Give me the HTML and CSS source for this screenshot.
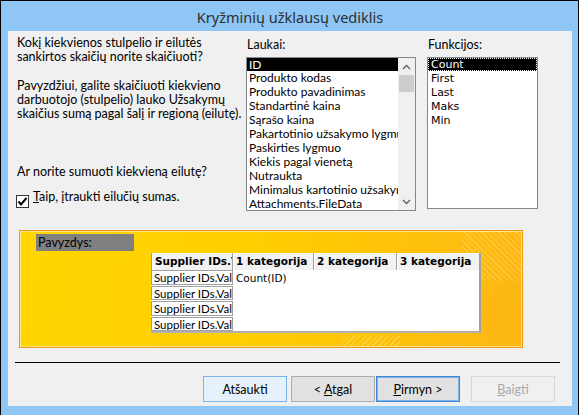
FILE: index.html
```html
<!DOCTYPE html>
<html lang="lt">
<head>
    <meta charset="UTF-8">
    <title>Kryžminių užklausų vediklis</title>
    <link rel="stylesheet" href="styles.css">
</head>
<body>
    <div class="window">
        <div class="titlebar">Kryžminių užklausų vediklis</div>

        <div class="client">
            <div class="top">
                <div class="intro">
                    <p class="q1">Kokį kiekvienos stulpelio ir eilutės<br>sankirtos skaičių norite skaičiuoti?</p>
                    <p class="q2">Pavyzdžiui, galite skaičiuoti kiekvieno<br>darbuotojo (stulpelio) lauko Užsakymų<br>skaičius sumą pagal šalį ir regioną (eilutę).</p>
                    <p class="q3">Ar norite sumuoti kiekvieną eilutę?</p>
                    <label class="check">
                        <span class="check-box">
                            <svg width="11" height="11" viewBox="0 0 11 11"><path d="M1.5 5.5 L4 8.5 L9.5 2" fill="none" stroke="#000" stroke-width="2"/></svg>
                        </span>
                        <span><u>T</u>aip, įtraukti eilučių sumas.</span>
                    </label>
                </div>

                <div class="fields">
                    <div class="cap">Laukai:</div>
                    <div class="listbox">
                        <ul class="items">
                            <li class="selected">ID</li>
                            <li>Produkto kodas</li>
                            <li>Produkto pavadinimas</li>
                            <li>Standartinė kaina</li>
                            <li>Sąrašo kaina</li>
                            <li>Pakartotinio užsakymo lygmuo</li>
                            <li>Paskirties lygmuo</li>
                            <li>Kiekis pagal vienetą</li>
                            <li>Nutraukta</li>
                            <li>Minimalus kartotinio užsakymo kiekis</li>
                            <li>Attachments.FileData</li>
                        </ul>
                        <div class="vscroll">
                            <div class="arrow">
                                <svg width="9" height="6" viewBox="0 0 9 6"><path d="M1 5 L4.5 1.5 L8 5" fill="none" stroke="#606060" stroke-width="1.4"/></svg>
                            </div>
                            <div class="thumb"></div>
                            <div class="track"></div>
                            <div class="arrow">
                                <svg width="9" height="6" viewBox="0 0 9 6"><path d="M1 1 L4.5 4.5 L8 1" fill="none" stroke="#606060" stroke-width="1.4"/></svg>
                            </div>
                        </div>
                    </div>
                </div>

                <div class="funcs">
                    <div class="cap">Funkcijos:</div>
                    <ul class="func-list">
                        <li class="selected">Count</li>
                        <li>First</li>
                        <li>Last</li>
                        <li>Maks</li>
                        <li>Min</li>
                    </ul>
                </div>
            </div>

            <div class="sample">
                <div class="sample-label">Pavyzdys:</div>
                <div class="grid">
                    <div class="grid-head">
                        <div class="hcell first">Supplier IDs.Value</div>
                        <div class="hcell">1 kategorija</div>
                        <div class="hcell">2 kategorija</div>
                        <div class="hcell last">3 kategorija</div>
                    </div>
                    <div class="grid-body">
                        <div class="row-heads">
                            <div class="rcell">Supplier IDs.Value</div>
                            <div class="rcell">Supplier IDs.Value</div>
                            <div class="rcell">Supplier IDs.Value</div>
                            <div class="rcell">Supplier IDs.Value</div>
                        </div>
                        <div class="values">Count(ID)</div>
                    </div>
                </div>
            </div>

            <div class="sep"></div>

            <div class="buttons">
                <button class="btn hot">Atšaukti</button>
                <button class="btn back">&lt; <u>A</u>tgal</button>
                <button class="btn default"><u>P</u>irmyn &gt;</button>
                <button class="btn" disabled><u>B</u>aigti</button>
            </div>
        </div>
    </div>
</body>
</html>
```

FILE: styles.css
```css
body {
    margin: 0;
    font-family: Lato, "Noto Sans", sans-serif;
    font-size: 12.5px;
    color: #000;
}

.window {
    width: 579px;
    height: 416px;
    box-sizing: border-box;
    border: 1px solid #000;
    border-bottom: none;
    background: #8ec6f6;
    padding: 0 6px 10px 7px;
    display: flex;
    flex-direction: column;
}

.titlebar {
    height: 30px;
    line-height: 32px;
    text-align: center;
    font-family: "Noto Sans", sans-serif;
    font-size: 14.5px;
    color: #2e2e2e;
}

.client {
    flex: 1;
    background: #f0f0f0;
    padding-top: 5px;
}

/* upper part: question text, fields list, functions list */
.top {
    display: flex;
    height: 176px;
}

.intro {
    width: 229px;
    margin-left: 9px;
    line-height: 14px;
    white-space: nowrap;
}

.intro p {
    margin: 0;
}

.q2 {
    margin-top: 15px !important;
}

.q3 {
    margin-top: 44px !important;
}

.check {
    display: flex;
    margin-top: 11px;
    margin-left: -1px;
}

.check-box {
    width: 13px;
    height: 13px;
    box-sizing: border-box;
    border: 1px solid #333;
    background: #fff;
    margin-top: 5px;
    margin-right: 4px;
    display: flex;
    align-items: center;
    justify-content: center;
}

.cap {
    margin-top: 2px;
    height: 14px;
    line-height: 14px;
    margin-bottom: 5px;
    padding-left: 1px;
}

.fields {
    width: 170px;
}

.listbox {
    height: 154px;
    box-sizing: border-box;
    border: 1px solid #828790;
    background: #fff;
    display: flex;
    overflow: hidden;
    font-size: 12px;
}

.items {
    list-style: none;
    margin: 0;
    padding: 0;
    flex: 1;
    overflow: hidden;
    white-space: nowrap;
}

.items li {
    height: 14px;
    line-height: 14px;
    padding-left: 2px;
}

.items li.selected {
    height: 13px;
    line-height: 13px;
    background: #000;
    color: #fff;
}

.vscroll {
    width: 17px;
    background: #f0f0f0;
    display: flex;
    flex-direction: column;
}

.vscroll .arrow {
    height: 17px;
    display: flex;
    align-items: center;
    justify-content: center;
}

.vscroll .thumb {
    height: 17px;
    margin: 0 1px;
    background: #cdcdcd;
}

.vscroll .track {
    flex: 1;
}

.funcs {
    margin-left: 11px;
    width: 111px;
}

.func-list {
    list-style: none;
    margin: 0;
    padding: 0;
    height: 152px;
    box-sizing: border-box;
    border: 1px solid #828790;
    background: #fff;
    font-family: "DejaVu Sans", sans-serif;
    font-size: 11px;
}

.func-list li {
    height: 14px;
    line-height: 14px;
    padding-left: 3px;
}

.func-list li.selected {
    height: 13px;
    line-height: 13px;
    background: #000;
    color: #fff;
    outline: 1px dotted #fff;
    outline-offset: -1px;
    margin-bottom: 1px;
}

/* yellow preview panel */
.sample {
    position: relative;
    margin: 18px 0 0 11px;
    width: 504px;
    height: 118px;
    box-sizing: border-box;
    border: 1px solid #f0960f;
    box-shadow: inset 0 0 0 1px #ffe58a;
    background: linear-gradient(100deg, #ffd600 0%, #ffcf00 45%, #fdb614 100%);
    padding: 3px 0 0 16px;
    overflow: hidden;
}

.sample::before {
    content: "";
    position: absolute;
    right: -10px;
    top: -20px;
    width: 70px;
    height: 70px;
    background: repeating-linear-gradient(45deg, rgba(255,255,255,0.22) 0 1px, transparent 1px 4px);
}

.sample::after {
    content: "";
    position: absolute;
    left: 320px;
    bottom: -12px;
    width: 60px;
    height: 24px;
    background: repeating-linear-gradient(-45deg, rgba(255,255,255,0.25) 0 1px, transparent 1px 4px);
}

.sample-label {
    width: 98px;
    height: 17px;
    line-height: 17px;
    background: #808080;
    padding-left: 2px;
    box-sizing: border-box;
}

.grid {
    position: relative;
    z-index: 1;
    margin: 2px 0 0 115px;
    width: 330px;
}

.grid-head {
    display: flex;
    height: 17px;
    font-family: "DejaVu Sans", sans-serif;
    font-size: 10.5px;
    font-weight: bold;
}

.hcell {
    box-sizing: border-box;
    background: #f2f2f2;
    border-right: 1px solid #a0a0a0;
    box-shadow: inset 1px 1px 0 #fff;
    padding-left: 3px;
    line-height: 17px;
    white-space: nowrap;
    overflow: hidden;
}

.hcell.first { width: 82px; border-left: 1px solid #a0a0a0; }
.hcell:nth-child(2) { width: 81px; }
.hcell:nth-child(3) { width: 83px; }
.hcell.last { width: 84px; border-right: 2px solid #a0a0a0; }

.grid-body {
    display: flex;
    height: 63px;
    background: #fff;
    border-right: 2px solid #a0a0a0;
    border-bottom: 2px solid #b0b0b0;
    box-sizing: border-box;
}

.row-heads {
    width: 82px;
    display: flex;
    flex-direction: column;
    gap: 1px;
    background: #fff;
    font-size: 11.5px;
}

.rcell {
    height: 15px;
    line-height: 13px;
    box-sizing: border-box;
    border: 1px solid #a0a0a0;
    padding-left: 2px;
    white-space: nowrap;
    overflow: hidden;
}

.values {
    flex: 1;
    padding: 1px 0 0 3px;
    font-family: "DejaVu Sans", sans-serif;
    font-size: 10.5px;
    line-height: 14px;
}

.sep {
    margin: 14px 0 0 7px;
    width: 545px;
    height: 1px;
    background: #000;
}

/* wizard buttons */
.buttons {
    display: flex;
    justify-content: flex-end;
    margin-top: 13px;
    padding-right: 17px;
}

.btn {
    width: 84px;
    height: 26px;
    font-family: inherit;
    font-size: 12.5px;
    color: #000;
    background: #e1e1e1;
    border: 1px solid #adadad;
    padding: 0;
    margin: 0;
}

.btn.hot {
    background: #e5f1fb;
    border-color: #7eb4ea;
    margin-right: 4px;
}

.btn.back {
    margin-right: 1px;
}

.btn.default {
    border: 1px solid #3f86d4;
    box-shadow: inset 0 0 0 1px #7fb2e8;
    margin-right: 11px;
}

.btn:disabled {
    background: #f0f0f0;
    border-color: #d9d9d9;
    color: #a8a8a8;
}
```
